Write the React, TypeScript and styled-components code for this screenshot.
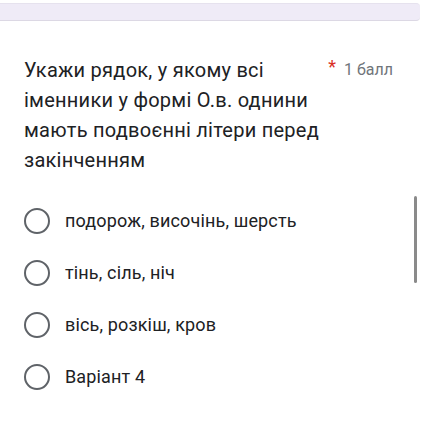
import React from 'react';
import styled, { createGlobalStyle } from 'styled-components';

const GlobalStyle = createGlobalStyle`
  html, body {
    margin: 0;
    padding: 0;
    background: #ffffff;
  }
  body {
    font-family: Roboto, "Noto Sans", sans-serif;
    font-weight: 400;
    color: #202124;
  }
`;

const Page = styled.div`
  width: 422px;
  height: 422px;
  position: relative;
  overflow: hidden;
  background: #ffffff;
`;

const TopStrip = styled.div`
  margin-top: 3px;
  height: 16px;
  margin-right: 2px;
  background: #efebf7;
  border-top: 1px solid #e6e2ee;
  border-bottom: 1px solid #dcd8e4;
  border-top-right-radius: 4px;
  border-bottom-right-radius: 4px;
`;

const Card = styled.div`
  padding: 34px 24px 0 24px;
`;

const Header = styled.div`
  display: flex;
  justify-content: space-between;
  align-items: flex-start;
`;

const Question = styled.div`
  flex: 0 0 302px;
  font-size: 20px;
  line-height: 30px;
  letter-spacing: 0.25px;
  color: #202124;
`;

const Points = styled.div`
  display: flex;
  flex-shrink: 0;
  align-items: flex-start;
  gap: 8px;
  padding-top: 3px;
  margin-right: 5px;
  white-space: nowrap;
  font-size: 16px;
  line-height: 24px;
  color: #70757a;
`;

const Star = styled.span`
  color: #d93025;
  font-size: 18px;
  line-height: 18px;
`;

const Options = styled.div`
  display: flex;
  flex-direction: column;
  gap: 26px;
  margin-top: 33px;
`;

const Option = styled.div`
  display: flex;
  align-items: center;
  gap: 15px;
  height: 26px;
`;

const Radio = styled.div`
  box-sizing: border-box;
  width: 26px;
  height: 26px;
  border: 2.5px solid #5f6368;
  border-radius: 50%;
  flex-shrink: 0;
`;

const Label = styled.span`
  font-size: 18px;
  line-height: 24px;
  letter-spacing: 0.15px;
  color: #202124;
`;

const Scrollbar = styled.div`
  position: absolute;
  right: 5px;
  top: 196px;
  width: 3px;
  height: 87px;
  border-radius: 2px;
  background: #8a8a8a;
`;

const options = [
  'подорож, височінь, шерсть',
  'тінь, сіль, ніч',
  'вісь, розкіш, кров',
  'Варіант 4',
];

export default function App() {
  return (
    <Page>
      <GlobalStyle />
      <TopStrip />
      <Card>
        <Header>
          <Question>
            Укажи рядок, у якому всі іменники у формі О.в. однини мають подвоєнні літери перед закінченням
          </Question>
          <Points>
            <Star>*</Star>
            <span>1 балл</span>
          </Points>
        </Header>
        <Options>
          {options.map((o) => (
            <Option key={o}>
              <Radio />
              <Label>{o}</Label>
            </Option>
          ))}
        </Options>
      </Card>
      <Scrollbar />
    </Page>
  );
}
